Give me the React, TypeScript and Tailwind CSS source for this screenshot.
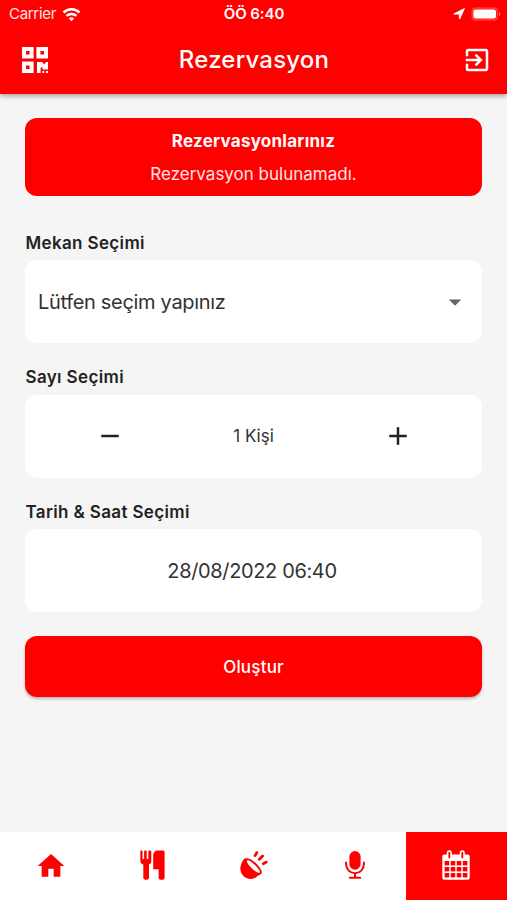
import { ReactNode, useState } from 'react'
import { MdAdd, MdArrowDropDown, MdExitToApp, MdHome, MdRemove } from 'react-icons/md'

const WifiIcon = () => (
  <svg width="19" height="15" viewBox="0 0 20 15" fill="none" stroke="white" strokeWidth="2.6">
    <path d="M1.6 5.4a12 12 0 0 1 16.8 0" />
    <path d="M4.8 9a7.4 7.4 0 0 1 10.4 0" />
    <path d="M10 14.6l-2.8-2.9a4 4 0 0 1 5.6 0z" fill="white" stroke="none" />
  </svg>
)

const LocationIcon = () => (
  <svg width="12" height="12" viewBox="0 0 12 12" fill="white">
    <path d="M11.4.6 6.6 11 6.2 6H.8z" stroke="white" strokeWidth="1" strokeLinejoin="round" />
  </svg>
)

const BatteryIcon = () => (
  <svg width="30" height="14" viewBox="0 0 30 14">
    <rect x="0.6" y="0.6" width="26.4" height="12.8" rx="4" fill="white" fillOpacity="0.3" />
    <rect x="1.6" y="1.6" width="24.4" height="10.8" rx="3" fill="#ff0000" fillOpacity="0.7" />
    <rect x="2.4" y="2.4" width="22.6" height="9.2" rx="2.4" fill="white" />
    <path d="M28 4.8c1.8.8 1.8 3.6 0 4.4z" fill="white" fillOpacity="0.45" />
  </svg>
)

const QrIcon = () => (
  <svg width="26" height="26" viewBox="0 0 26 26" fill="white">
    <path fillRule="evenodd" d="M0 0h11.6v11.6H0zM4 4v3.6h3.6V4z" />
    <path fillRule="evenodd" d="M14.4 0H26v11.6H14.4zM18.4 4v3.6H22V4z" />
    <path fillRule="evenodd" d="M0 14.4h11.6V26H0zM4 18.4V22h3.6v-3.6z" />
    <path d="M15 15h5l2.4 2.4L24 15h2v7.4h-5.4v-2h-2V26H15zM20.4 24h1.8v2h-1.8zM24 24h2v2h-2z" />
  </svg>
)

const CutleryIcon = () => (
  <svg width="25" height="30" viewBox="0 0 25 30" fill="currentColor">
    <path d="M.3 1.2c0-1.1 2.2-1.1 2.2 0V9h1.6V1.2c0-1.1 2.6-1.1 2.6 0V9h1.6V1.2c0-1.1 3-1.1 3 0V11c0 1.9-.9 2.9-2.3 3.6v13.2c0 2.7-5.7 2.7-5.7 0V14.6C1.3 13.8.3 12.9.3 11z" />
    <path d="M18 .4h5c.9 0 1.6.6 1.6 1.5v26c0 2.5-6 2.5-6 0v-8.6h-4.5c-.6 0-.9-.3-.9-.9V5.2c0-2.7 2-4.8 4.8-4.8z" />
  </svg>
)

const DrumIcon = () => (
  <svg width="28" height="28" viewBox="0 0 28 28" fill="currentColor" className="ml-px">
    <path
      fillRule="evenodd"
      d="M4.8 7.6C7.6 6.300 13 9 17.2 13.4c3.7 3.9 5.6 7.8 4.2 9.3-1.3 1.2-3.3 1.7-5.4 3.500-3.2 2.600-9 2.200-12.300-1C.4 22-.5 17.400 1.200 13.300c1-2.300 1.700-4.800 3.600-5.700zM7.200 9.400c-.9 1.400 1.400 4.700 4.600 7.900 3.300 3.100 6.600 5.300 7.900 4.200 1-1-1-3.900-4.200-7.100-3.400-3.300-7.100-5.900-8.300-5z"
    />
    <path
      d="M15.1 4.6l1.7-3M19.4 8.2l3.2-3.1M23.3 12.7l3-1.6"
      fill="none"
      stroke="currentColor"
      strokeWidth="2.8"
      strokeLinecap="round"
    />
  </svg>
)

const MicIcon = () => (
  <svg width="20" height="28" viewBox="0 0 20 28" fill="none" stroke="currentColor" strokeWidth="2">
    <rect x="4.4" y="0" width="11.2" height="18.7" rx="5.6" fill="currentColor" stroke="none" />
    <path d="M1.1 11.4v1.9a8.9 8.9 0 0 0 17.8 0v-1.9M10 22.4v4M4.8 26.8h10.4" strokeLinecap="round" />
  </svg>
)

const CalendarIcon = () => (
  <svg width="28" height="30" viewBox="0 0 28 30">
    <rect x="0.3" y="4.4" width="27.4" height="25.4" rx="2" fill="white" />
    <rect x="4.8" y="0.3" width="5" height="9" rx="2.5" fill="white" />
    <rect x="17.8" y="0.3" width="5" height="9" rx="2.5" fill="white" />
    <path d="M7.3 2.6v5M20.3 2.6v5" stroke="#ff0000" strokeWidth="1.8" strokeLinecap="round" />
    {[11, 17, 23].map((y) =>
      [2.6, 8.7, 14.7, 20.8].map((x) => (
        <rect key={`${x}-${y}`} x={x} y={y} width="4.6" height="4.4" fill="#ff0000" />
      ))
    )}
  </svg>
)

type FieldProps = {
  label: string
  children: ReactNode
}
const Field = ({ label, children }: FieldProps) => (
  <div className="mb-[17px]">
    <h2 className="h-[34.4px] pt-[5px] pl-[0.5px] text-[17px] leading-6 font-semibold tracking-[0.36px] text-[#222]">
      {label}
    </h2>
    <div className="h-[83px] rounded-xl bg-white text-[#333]">{children}</div>
  </div>
)

const tabs = [
  { name: 'home', icon: <MdHome size={32} className="mt-0.5" /> },
  { name: 'menu', icon: <CutleryIcon /> },
  { name: 'activity', icon: <DrumIcon /> },
  { name: 'voice', icon: <MicIcon /> },
  { name: 'calendar', icon: <CalendarIcon /> },
]

const App = () => {
  const [count, setCount] = useState(1)
  const [active, setActive] = useState('calendar')

  return (
    <div className="flex h-[900px] w-full flex-col bg-[#f5f5f5] font-['Inter',sans-serif]">
      <header className="z-10 h-[94px] shrink-0 bg-[#ff0000] text-white shadow-[0_2px_5px_rgba(0,0,0,0.35)]">
        <div className="grid h-7 grid-cols-3 items-center pr-1.5 pl-[9px] text-[15px]">
          <div className="flex items-center gap-1.5 text-white/90">
            <span className="tracking-[-0.3px]">Carrier</span>
            <WifiIcon />
          </div>
          <div className="pr-[2px] text-center font-semibold tracking-[-0.1px]">ÖÖ 6:40</div>
          <div className="flex items-center justify-end gap-1.5">
            <LocationIcon />
            <BatteryIcon />
          </div>
        </div>
        <div className="flex h-[63px] items-center justify-between pr-[15px] pl-[22px]">
          <QrIcon />
          <h1 className="pt-px pr-[2px] text-2xl font-medium tracking-[0.2px]">Rezervasyon</h1>
          <MdExitToApp size={30} />
        </div>
      </header>

      <main className="flex-1 px-[25px] pt-6">
        <section className="mb-[30px] h-[78px] rounded-xl bg-[#ff0000] pt-[11px] text-center text-[17px] leading-6 text-white">
          <h2 className="font-bold tracking-[0.25px]">Rezervasyonlarınız</h2>
          <p className="mt-[9px] text-white/90">Rezervasyon bulunamadı.</p>
        </section>

        <Field label="Mekan Seçimi">
          <div className="flex h-full items-center justify-between pr-3 pl-[13px] text-xl">
            <span className="tracking-[-0.32px]">Lütfen seçim yapınız</span>
            <MdArrowDropDown size={30} className="text-[#666]" />
          </div>
        </Field>
        <Field label="Sayı Seçimi">
          <div className="grid h-full grid-cols-[169px_1fr_169px] items-center justify-items-center text-[17px]">
            <button className="text-[#222]" onClick={() => setCount(Math.max(1, count - 1))}>
              <MdRemove size={30} />
            </button>
            <span>{count} Kişi</span>
            <button className="text-[#222]" onClick={() => setCount(count + 1)}>
              <MdAdd size={30} />
            </button>
          </div>
        </Field>
        <Field label="Tarih & Saat Seçimi">
          <div className="flex h-full items-center justify-center pr-[3px] text-xl tracking-[-0.36px]">
            28/08/2022 06:40
          </div>
        </Field>

        <button className="mt-[7px] h-[61px] w-full rounded-xl bg-[#ff0000] pt-[2px] text-[17px] font-medium tracking-[0.2px] text-white shadow-[0_2px_3px_rgba(0,0,0,0.25)]">
          Oluştur
        </button>
      </main>

      <nav className="grid h-[68px] shrink-0 grid-cols-5 bg-white">
        {tabs.map((tab) => (
          <button
            key={tab.name}
            onClick={() => setActive(tab.name)}
            className={
              'flex items-center justify-center pb-[2px] ' +
              (active === tab.name ? 'bg-[#ff0000] text-white' : 'text-[#ff0000]')
            }
          >
            {tab.icon}
          </button>
        ))}
      </nav>
    </div>
  )
}

export default App
